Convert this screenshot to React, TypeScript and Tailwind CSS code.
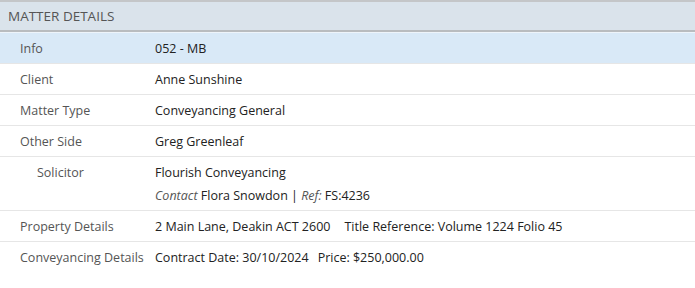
const font = { fontFamily: '"Open Sans", "Noto Sans", sans-serif' }

interface Row {
  label: string
  indent?: boolean
  highlight?: boolean
  value: React.ReactNode
}

const rows: Row[] = [
  { label: 'Info', value: '052 - MB', highlight: true },
  { label: 'Client', value: 'Anne Sunshine' },
  { label: 'Matter Type', value: 'Conveyancing General' },
  { label: 'Other Side', value: 'Greg Greenleaf' },
  {
    label: 'Solicitor',
    indent: true,
    value: (
      <>
        <div>Flourish Conveyancing</div>
        <div className="mt-[3px]">
          <span className="italic text-[#555]">Contact</span> Flora Snowdon |{' '}
          <span className="italic text-[#555]">Ref:</span> FS:4236
        </div>
      </>
    ),
  },
  {
    label: 'Property Details',
    value: (
      <>
        2 Main Lane, Deakin ACT 2600<span className="ml-[14px]">Title Reference: Volume 1224 Folio 45</span>
      </>
    ),
  },
  {
    label: 'Conveyancing Details',
    value: (
      <>
        Contract Date: 30/10/2024<span className="ml-[9px]">Price: $250,000.00</span>
      </>
    ),
  },
]

export default function App() {
  return (
    <div className="h-[288px] w-[695px] bg-white text-[12.5px]" style={font}>
      <div className="flex h-[32px] items-center border-t-2 border-b-2 border-t-[#c4c6c8] border-b-[#b9bcbf] bg-[#dae3eb] pl-[8px] text-[13.5px] text-[#555]">
        MATTER DETAILS
      </div>
      {rows.map((row, i) => (
        <div
          key={row.label}
          className={`flex items-start border-b border-[#e6e6e6] pt-[6px] leading-[20px] ${
            row.indent ? 'pb-[4px]' : 'pb-[4px]'
          } ${row.highlight ? 'border-t border-t-[#eef4fa] bg-[#d9e9f7]' : ''} ${
            i === rows.length - 1 ? 'border-b-0' : ''
          }`}
        >
          <div className={`w-[155px] shrink-0 text-[#555] ${row.indent ? 'pl-[37px]' : 'pl-[20px]'}`}>
            {row.label}
          </div>
          <div className="text-[#222]">{row.value}</div>
        </div>
      ))}
    </div>
  )
}
